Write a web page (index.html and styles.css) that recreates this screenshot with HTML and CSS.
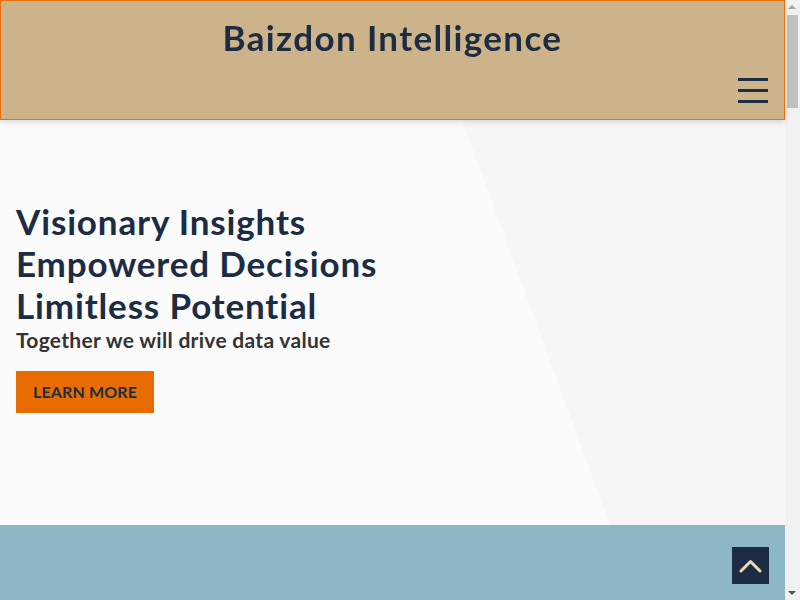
FILE: index.html
```html
<!DOCTYPE html>
<html lang="en">
<head>
<meta charset="utf-8">
<title>Baizdon Intelligence</title>
<link rel="stylesheet" href="styles.css">
</head>
<body>
<div class="page">
  <header class="site-header">
    <h1 class="brand">Baizdon Intelligence</h1>
    <div class="nav-row">
      <button class="menu-toggle" aria-label="Menu">
        <span class="bar"></span><span class="bar"></span><span class="bar"></span>
      </button>
    </div>
  </header>
  <section class="hero">
    <svg class="hero-shape" viewBox="0 0 785 405" preserveAspectRatio="none" aria-hidden="true">
      <polygon points="462,0 785,0 785,405 610,405" fill="#f6f6f6"/>
    </svg>
    <div class="hero-content">
      <h2 class="hero-title">Visionary Insights<br>Empowered Decisions<br>Limitless Potential</h2>
      <p class="hero-sub">Together we will drive data value</p>
      <a class="btn" href="#">LEARN MORE</a>
    </div>
  </section>
  <section class="band"></section>
</div>
<a class="to-top" href="#" aria-label="Back to top">
  <svg width="23" height="14" viewBox="0 0 23 14"><polyline points="2,12 11.5,2.5 21,12" fill="none" stroke="#f1d7ad" stroke-width="3" stroke-linecap="round" stroke-linejoin="round"/></svg>
</a>
<div class="scrollbar" aria-hidden="true">
  <span class="sb-arrow sb-up"></span>
  <span class="sb-thumb"></span>
  <span class="sb-arrow sb-down"></span>
</div>
</body>
</html>
```

FILE: styles.css
```css
* { box-sizing: border-box; }
html, body { margin: 0; padding: 0; }
body {
  font-family: Lato, "Open Sans", sans-serif;
  background: #fbfbfb;
  color: #1b2c44;
}
.page { margin-right: 15px; }
.site-header {
  position: relative;
  z-index: 2;
  height: 120px;
  background: #cdb38a;
  border: 1px solid #e8700a;
  box-shadow: 0 2px 6px rgba(0,0,0,0.15);
  display: flex;
  flex-direction: column;
}
.brand {
  margin: 0;
  padding-top: 15px;
  text-align: center;
  font-size: 35px;
  font-weight: 700;
  line-height: 42px;
  letter-spacing: 1.35px;
  color: #1b2c44;
}
.nav-row {
  display: flex;
  justify-content: flex-end;
  padding: 20px 16px 0 0;
}
.menu-toggle {
  background: none;
  border: 0;
  padding: 0;
  width: 30px;
  height: 25px;
  display: flex;
  flex-direction: column;
  justify-content: space-between;
  cursor: pointer;
}
.bar { display: block; height: 3px; width: 30px; background: #1b2c44; }
.hero {
  position: relative;
  height: 405px;
  background: #fbfbfb;
}
.hero-shape {
  position: absolute;
  inset: 0;
  width: 100%;
  height: 100%;
}
.hero-content {
  position: relative;
  padding: 80px 16px 0;
  display: flex;
  flex-direction: column;
  align-items: flex-start;
}
.hero-title {
  margin: 0;
  font-size: 35px;
  font-weight: 700;
  line-height: 42px;
  letter-spacing: 0.85px;
  color: #1b2c44;
}
.hero-sub {
  margin: 2px 0 0;
  font-size: 21px;
  font-weight: 700;
  line-height: 24px;
  letter-spacing: 0.3px;
  color: #333333;
}
.btn {
  display: block;
  margin-top: 19px;
  height: 42px;
  padding: 0 17px 0 17px;
  line-height: 42px;
  background: #e86c00;
  color: #1b2c44;
  font-size: 16px;
  font-weight: 700;
  letter-spacing: 0.15px;
  text-decoration: none;
}
.band {
  height: 3200px;
  background: #8cb8c6;
}
.to-top {
  position: fixed;
  right: 31px;
  bottom: 16px;
  width: 37px;
  height: 37px;
  background: #1b2c44;
  display: flex;
  align-items: center;
  justify-content: center;
}
.scrollbar {
  position: fixed;
  top: 0;
  right: 0;
  width: 15px;
  height: 100%;
  background: #f1f1f1;
}
.sb-thumb {
  position: absolute;
  top: 15px;
  left: 2px;
  width: 11px;
  height: 93px;
  background: #c1c1c1;
}
.sb-arrow {
  position: absolute;
  left: 3px;
  width: 0;
  height: 0;
  border-left: 4.5px solid transparent;
  border-right: 4.5px solid transparent;
}
.sb-up { top: 5px; border-bottom: 4.5px solid #a3a3a3; }
.sb-down { bottom: 5px; border-top: 4.5px solid #505050; }
```
